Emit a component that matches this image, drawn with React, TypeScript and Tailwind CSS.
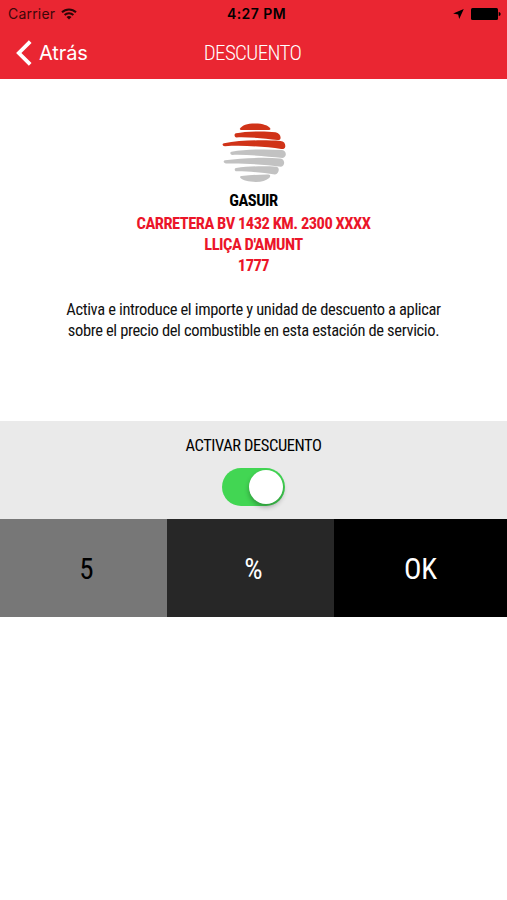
import React from 'react';

const condensed = "font-['Roboto_Condensed',Roboto,sans-serif] [font-stretch:75%]";

const StatusBar = () => (
  <div className="grid h-[27px] grid-cols-3 items-center px-2 font-[Inter,sans-serif] text-[14px] text-black">
    <div className="flex items-center gap-1.5">
      <span className="tracking-[0.2px] text-[#3d0709]">Carrier</span>
      <svg viewBox="0 0 16 12" className="h-[12px] w-[16px]" fill="none" stroke="#2b0506">
        <path d="M1 4.3a10 10 0 0 1 14 0" strokeWidth="2" />
        <path d="M3.6 7a6.3 6.3 0 0 1 8.8 0" strokeWidth="1.9" />
        <path d="M8 11.6 5.5 9.1a3.6 3.6 0 0 1 5 0z" fill="#2b0506" stroke="none" />
      </svg>
    </div>
    <span className="pl-1.5 text-center font-semibold tracking-[0.45px]">4:27 PM</span>
    <div className="flex items-center justify-end gap-[7px]">
      <svg viewBox="0 0 11 10" className="h-[10px] w-[11px]">
        <path d="M10.8 0 6.2 10 5.2 5.6.1 4.6z" />
      </svg>
      <svg viewBox="0 0 30 12" className="-mr-[2px] h-[12px] w-[30px]">
        <rect width="27" height="12" rx="1.5" />
        <path d="M27.700 4c2.600 0 2.600 4 0 4z" />
      </svg>
    </div>
  </div>
);

const NavBar = () => (
  <div className="grid h-[52px] grid-cols-3 items-center">
    <button className="flex items-center gap-[7px] pl-4 font-[Inter,sans-serif] text-[20px] tracking-[-0.1px] text-white">
      <svg viewBox="0 0 16 26" className="h-[26px] w-[16px]" fill="none" stroke="white" strokeWidth="3.8">
        <path d="M14.2 1.6 2.8 13l11.4 11.4" />
      </svg>
      Atrás
    </button>
    <h1 className={`pt-[2px] pr-[2px] text-center text-[21px] font-light tracking-[-0.65px] text-white ${condensed}`}>
      DESCUENTO
    </h1>
  </div>
);

const Logo = () => (
  <svg viewBox="0 0 64 60" className="ml-px h-[60px] w-[64px]">
    <g fill="#d03318">
      <path d="M18 6.5C20 3.200 25 1.400 33 1.400s13.500 2 15.300 5.100c.4 1.300-.5 1.500-2 1.500H20c-1.700 0-2.500-.4-2-1.500z" />
      <path d="M14 11.300c9-1.800 27-2.500 39.500-1.100 3.500.6 5.500 3.300 5 6.300-.3 1.400-1.500 1.700-3 1.600C43 16.300 28 15 14.500 15.400c-2.200-.2-2.800-3.400-.5-4.100z" />
      <path d="M2 21.200C18 18 42 17.800 58.500 18.900c3.500.4 5 2.500 4.800 5.600-.3 2.300-2 2.700-4 2.500C43 24.600 20 23 3 24.300c-2.500-.2-3.500-2.500-1-3.100z" />
    </g>
    <g fill="#c2c2c2">
      <path d="M9.500 29.700C25 27.200 44 26.900 60 28c4.800.8 5.200 7.200.5 8C44 34.200 26 32.400 10 32.900c-1.800-.2-2.500-2.700-.5-3.200z" />
      <path d="M3 38.300c18-2.500 39-3 55.500-1.900 4.700.8 4.900 7.500.5 8.300C42 42.500 20 41 4 41.500c-2-.2-3.500-2.500-1-3.200z" />
      <path d="M14 45.900c13-1.700 28-2 40.500-1.200 3.800.8 2.500 7.200-1.500 7.800C40 50.700 26 49.200 14.500 49.300c-2-.2-2.500-2.900-.5-3.400z" />
      <path d="M19.500 54c9-.7 17-1.600 27-1.500 2.500.3 2 2.400.3 3.700C44 58.500 40 60 34 60c-7.500 0-13.500-1.600-15.500-3.900-.7-1-.3-2 1-2.100z" />
    </g>
  </svg>
);

export default function App() {
  return (
    <div className={`flex min-h-[900px] w-[507px] flex-col bg-white ${condensed}`}>
      <header className="h-[79px] bg-[#ea2632]">
        <StatusBar />
        <NavBar />
      </header>

      <section className="flex h-[342px] flex-col items-center pt-[43px] text-center text-[16.5px] leading-[21px]">
        <Logo />
        <div className="mt-[8px] font-bold tracking-[-0.5px] text-[#eb1529]">
          <p className="mb-[2px] text-black">GASUIR</p>
          <p>CARRETERA BV 1432 KM. 2300 XXXX</p>
          <p>LLIÇA D'AMUNT</p>
          <p>1777</p>
        </div>
        <p className="mt-[23px] tracking-[-0.36px] text-[#111]">
          Activa e introduce el importe y unidad de descuento a aplicar
          <br />
          sobre el precio del combustible en esta estación de servicio.
        </p>
      </section>

      <section className="flex h-[98px] flex-col items-center bg-[#eaeaea] pt-[14px]">
        <span className="text-[16.5px] leading-[22px] tracking-[-0.42px] text-black">ACTIVAR DESCUENTO</span>
        <button
          role="switch"
          aria-checked="true"
          className="mt-[11px] flex h-[38px] w-[63px] items-center justify-end rounded-full bg-[#42d653] pr-[2px]"
        >
          <span className="h-[34px] w-[34px] rounded-full bg-white shadow-[0_3px_5px_rgba(0,0,0,0.3)]" />
        </button>
      </section>

      <div className="grid h-[97.5px] grid-cols-[167px_167px_173px] text-[29px]">
        <button className="bg-[#777] pt-[3px] pl-[6px] text-black">5</button>
        <button className="bg-[#272727] pt-[3px] pl-[6px] text-white">%</button>
        <button className="bg-black pt-[3px] text-white">OK</button>
      </div>
    </div>
  );
}
